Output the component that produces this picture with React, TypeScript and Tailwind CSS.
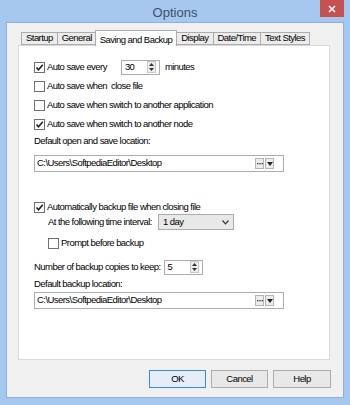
import type { ReactNode } from 'react'

const font = { fontFamily: '"Liberation Sans", Arial, sans-serif' }

function Check({ checked }: { checked?: boolean }) {
  return (
    <span className="w-[11px] h-[11px] border border-[#707070] bg-white flex items-center justify-center shrink-0">
      {checked && (
        <svg width="9" height="9" viewBox="0 0 9 9">
          <path d="M1.5 4.5 L3.5 6.8 L7.8 1.8" stroke="#222" strokeWidth="1.6" fill="none" />
        </svg>
      )}
    </span>
  )
}

function CheckRow({ checked, children, className }: { checked?: boolean; children: ReactNode; className: string }) {
  return (
    <div className={`h-[16px] flex items-center gap-[2px] ${className}`}>
      <Check checked={checked} />
      <span>{children}</span>
    </div>
  )
}

function Spin({ value, className }: { value: string; className: string }) {
  return (
    <div className={`h-[15px] border border-[#abadb3] bg-white flex items-center justify-between pl-[3px] pr-[3px] ${className}`}>
      <span>{value}</span>
      <div className="w-[9px] h-[12px] border border-[#c8c8c8] bg-[#ececec] flex flex-col items-center justify-center gap-[2px]">
        <svg width="5" height="3" viewBox="0 0 5 3">
          <path d="M0 3 L2.5 0 L5 3 Z" fill="#333" />
        </svg>
        <svg width="5" height="3" viewBox="0 0 5 3">
          <path d="M0 0 L2.5 3 L5 0 Z" fill="#333" />
        </svg>
      </div>
    </div>
  )
}

function PathCombo({ className }: { className: string }) {
  return (
    <div className={`w-[250px] h-[17px] border border-[#abadb3] bg-white flex items-center pl-[2px] pr-[9px] ${className}`}>
      <span className="flex-1">C:\Users\SoftpediaEditor\Desktop</span>
      <div className="w-[9px] h-[11px] border border-[#b5b5b5] bg-[#ececec] flex items-center justify-center">
        <svg width="6" height="2" viewBox="0 0 6 2">
          <rect x="0" y="0" width="1.3" height="1.3" fill="#333" />
          <rect x="2.3" y="0" width="1.3" height="1.3" fill="#333" />
          <rect x="4.6" y="0" width="1.3" height="1.3" fill="#333" />
        </svg>
      </div>
      <div className="w-[9px] h-[11px] border border-[#b5b5b5] bg-[#ececec] flex items-center justify-center ml-[1px]">
        <svg width="6" height="4" viewBox="0 0 6 4">
          <path d="M0 0 L3 4 L6 0 Z" fill="#222" />
        </svg>
      </div>
    </div>
  )
}

const tabs = ['Startup', 'General', 'Saving and Backup', 'Display', 'Date/Time', 'Text Styles']

export default function App() {
  return (
    <div
      className="w-[350px] h-[405px] bg-[#a6c8ee] flex flex-col text-[9.5px] tracking-[-0.55px] text-black overflow-hidden"
      style={font}
    >
      <div className="h-[22px] flex items-start relative shrink-0">
        <div className="flex-1 h-[22px] flex items-center justify-center text-[13px] tracking-normal text-[#3a4f6e] pt-[3px]">
          Options
        </div>
        <div className="absolute right-[6px] top-0 w-[24px] h-[17px] bg-[#c75050] flex items-center justify-center">
          <svg width="8" height="8" viewBox="0 0 8 8">
            <path d="M1 1 L7 7 M7 1 L1 7" stroke="#fff" strokeWidth="1.6" />
          </svg>
        </div>
      </div>

      <div className="mx-[6px] h-[376px] bg-[#f0f0f0] border border-[#8fb0d6] flex flex-col">
        {/* tabs */}
        <div className="ml-[14px] mt-[6px] h-[16px] flex items-end">
          {tabs.map((t) =>
            t === 'Saving and Backup' ? (
              <div
                key={t}
                className="h-[16px] px-[4px] -mx-[1px] border border-b-0 border-[#acacac] bg-white relative z-10 flex items-start pt-[2px] mb-[-1px]"
              >
                {t}
              </div>
            ) : (
              <div
                key={t}
                className="h-[13px] px-[4px] border border-[#acacac] border-r-0 last:border-r bg-[#ececec] flex items-center"
              >
                {t}
              </div>
            )
          )}
        </div>

        <div className="ml-[11px] w-[312px] h-[315px] border border-[#d9d9d9] bg-white flex flex-col pl-[15px]">
          <div className="mt-[13px] h-[16px] flex items-center">
            <Check checked />
            <span className="ml-[2px]">Auto save every</span>
            <Spin value="30" className="ml-[14px] w-[39px]" />
            <span className="ml-[5px]">minutes</span>
          </div>
          <CheckRow className="mt-[3px]">Auto save when &nbsp;close file</CheckRow>
          <CheckRow className="mt-[3px]">Auto save when switch to another application</CheckRow>
          <CheckRow checked className="mt-[3px]">Auto save when switch to another node</CheckRow>
          <div className="mt-[1px] h-[16px] flex items-center">Default open and save location:</div>
          <PathCombo className="mt-[6px]" />

          <CheckRow checked className="mt-[27px]">Automatically backup file when closing file</CheckRow>
          <div className="mt-[-1px] h-[16px] flex items-center pl-[14px]">
            <span>At the following time interval:</span>
            <div className="ml-[6px] w-[76px] h-[16px] border border-[#acacac] bg-[#e8e8e8] flex items-center justify-between pl-[4px] pr-[4px]">
              <span>1 day</span>
              <svg width="7" height="5" viewBox="0 0 7 5">
                <path d="M0.5 0.5 L3.5 3.8 L6.5 0.5" stroke="#333" strokeWidth="1.2" fill="none" />
              </svg>
            </div>
          </div>
          <CheckRow className="mt-[5px] pl-[14px]">Prompt before backup</CheckRow>
          <div className="mt-[8px] h-[16px] flex items-center">
            <span>Number of backup copies to keep:</span>
            <Spin value="5" className="ml-[3px] w-[39px]" />
          </div>
          <div className="mt-[1px] h-[16px] flex items-center">Default backup location:</div>
          <PathCombo className="mt-0" />
        </div>

        <div className="mt-[10px] flex justify-end gap-[5px] pr-[12px]">
          <button className="w-[57px] h-[18px] border border-[#3c8ad8] bg-[#e5eef8] text-[9.5px]">OK</button>
          <button className="w-[57px] h-[18px] border border-[#acacac] bg-[#e8e8e8] text-[9.5px]">Cancel</button>
          <button className="w-[58px] h-[18px] border border-[#acacac] bg-[#e8e8e8] text-[9.5px]">Help</button>
        </div>
      </div>
    </div>
  )
}
